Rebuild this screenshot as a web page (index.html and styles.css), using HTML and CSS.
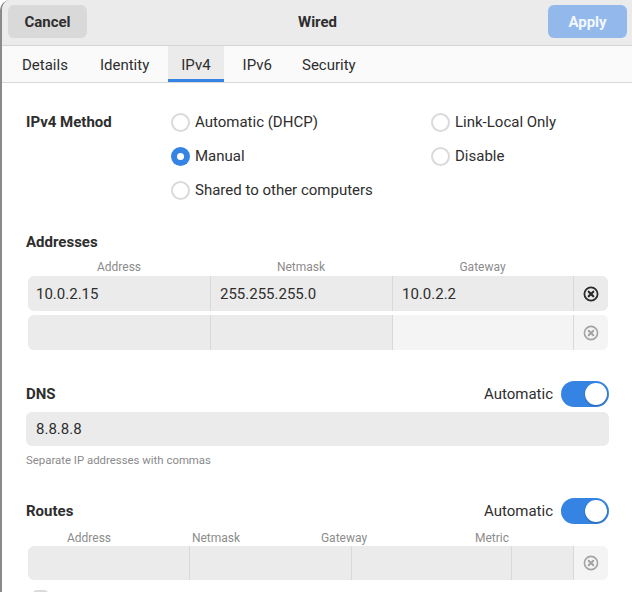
FILE: index.html
```html
<!DOCTYPE html>
<html lang="en">
<head>
<meta charset="utf-8">
<title>Wired</title>
<link rel="stylesheet" href="styles.css">
</head>
<body>
<div class="window">
  <header class="headerbar">
    <button class="btn btn-cancel">Cancel</button>
    <div class="title">Wired</div>
    <button class="btn btn-apply">Apply</button>
  </header>
  <nav class="tabs">
    <span class="tab">Details</span>
    <span class="tab">Identity</span>
    <span class="tab active">IPv4</span>
    <span class="tab">IPv6</span>
    <span class="tab">Security</span>
  </nav>
  <main class="content">
    <section class="method">
      <div class="method-label">IPv4 Method</div>
      <div class="radios">
        <label class="radio"><span class="dot"></span>Automatic (DHCP)</label>
        <label class="radio"><span class="dot"></span>Link-Local Only</label>
        <label class="radio"><span class="dot checked"></span>Manual</label>
        <label class="radio"><span class="dot"></span>Disable</label>
        <label class="radio"><span class="dot"></span>Shared to other computers</label>
      </div>
    </section>

    <section class="addresses">
      <div class="section-title">Addresses</div>
      <div class="colheads addr-heads">
        <span>Address</span><span>Netmask</span><span>Gateway</span><span></span>
      </div>
      <div class="entry-row addr-grid">
        <span class="cell">10.0.2.15</span>
        <span class="cell">255.255.255.0</span>
        <span class="cell">10.0.2.2</span>
        <span class="cell icon-cell">
          <svg width="16" height="16" viewBox="0 0 16 16"><circle cx="8" cy="8" r="6.6" fill="none" stroke="#2a2a2a" stroke-width="1.8"/><path d="M5.7 5.7 L10.3 10.3 M10.3 5.7 L5.7 10.3" stroke="#2a2a2a" stroke-width="2.2" stroke-linecap="round"/></svg>
        </span>
      </div>
      <div class="entry-row addr-grid">
        <span class="cell"></span>
        <span class="cell"></span>
        <span class="cell light"></span>
        <span class="cell icon-cell light">
          <svg width="16" height="16" viewBox="0 0 16 16"><circle cx="8" cy="8" r="6.6" fill="none" stroke="#a3a3a3" stroke-width="1.6"/><path d="M5.7 5.7 L10.3 10.3 M10.3 5.7 L5.7 10.3" stroke="#a3a3a3" stroke-width="2" stroke-linecap="round"/></svg>
        </span>
      </div>
    </section>

    <section class="dns">
      <div class="section-head">
        <div class="section-title">DNS</div>
        <div class="auto">Automatic <span class="switch"><span class="knob"></span></span></div>
      </div>
      <div class="entry">8.8.8.8</div>
      <div class="hint">Separate IP addresses with commas</div>
    </section>

    <section class="routes">
      <div class="section-head">
        <div class="section-title">Routes</div>
        <div class="auto">Automatic <span class="switch"><span class="knob"></span></span></div>
      </div>
      <div class="colheads route-heads">
        <span>Address</span><span>Netmask</span><span>Gateway</span><span>Metric</span>
      </div>
      <div class="entry-row route-grid">
        <span class="cell"></span>
        <span class="cell"></span>
        <span class="cell"></span>
        <span class="cell"></span>
        <span class="cell icon-cell light">
          <svg width="16" height="16" viewBox="0 0 16 16"><circle cx="8" cy="8" r="6.6" fill="none" stroke="#a3a3a3" stroke-width="1.6"/><path d="M5.7 5.7 L10.3 10.3 M10.3 5.7 L5.7 10.3" stroke="#a3a3a3" stroke-width="2" stroke-linecap="round"/></svg>
        </span>
      </div>
      <div class="check"></div>
    </section>
  </main>
</div>
</body>
</html>
```
FILE: styles.css
```css
* { box-sizing: border-box; }
html, body {
  margin: 0;
  padding: 0;
  height: 100%;
  background: #ffffff;
}
body {
  font-family: Roboto, "Noto Sans", sans-serif;
  font-size: 15px;
  color: #2e2e2e;
  overflow: hidden;
}
.window {
  height: 100%;
  border-left: 2px solid #8a8a8a;
  border-top-left-radius: 10px;
  background: #ffffff;
  overflow: hidden;
}
.headerbar {
  height: 46px;
  background: #ebebeb;
  border-bottom: 1px solid #d5d5d5;
  display: flex;
  align-items: flex-start;
  justify-content: space-between;
  padding: 5px 5px 0 6px;
}
.btn {
  font: inherit;
  font-weight: 700;
  height: 33px;
  border: none;
  border-radius: 6px;
  padding: 0;
  line-height: 35px;
}
.btn-cancel {
  width: 79px;
  background: #d9d9d9;
  color: #2e2e2e;
}
.btn-apply {
  width: 79px;
  background: #92b8ec;
  color: #f4f8fe;
}
.title {
  font-weight: 700;
  line-height: 35px;
}
.tabs {
  height: 37px;
  background: #fafafa;
  border-bottom: 1px solid #d8d8d8;
  display: flex;
  gap: 6px;
  padding-left: 7px;
}
.tab {
  padding: 0 13px;
  line-height: 38px;
  height: 36px;
  color: #2e2e2e;
}
.tab:nth-child(5) { margin-left: -2px; }
.tab.active {
  background: #ebebeb;
  box-shadow: inset 0 -3px 0 #3584e4;
}
.content {
  padding: 22px 23px 0 24px;
}
.method {
  display: flex;
}
.method-label {
  font-weight: 700;
  width: 145px;
  line-height: 34px;
}
.radios {
  display: grid;
  grid-template-columns: 260px auto;
  grid-auto-rows: 34px;
}
.radio {
  display: flex;
  align-items: center;
  gap: 5px;
}
.dot {
  width: 19px;
  height: 19px;
  border-radius: 50%;
  border: 2px solid #dadada;
  background: #fff;
  flex: none;
  position: relative;
}
.dot.checked {
  border: none;
  background: #3584e4;
}
.dot.checked::after {
  content: "";
  position: absolute;
  left: 6px;
  top: 6px;
  width: 7px;
  height: 7px;
  border-radius: 50%;
  background: #fff;
}
.section-title {
  font-weight: 700;
  line-height: 20px;
}
.addresses {
  margin-top: 25px;
}
.colheads {
  font-size: 12px;
  color: #8c8c8c;
  line-height: 18px;
  text-align: center;
}
.addr-heads {
  display: grid;
  grid-template-columns: 182px 182px 181px 35px;
  width: 580px;
  margin: 6px 0 0 2px;
}
.addr-grid {
  display: grid;
  grid-template-columns: 182px 182px 181px 35px;
  margin: 0 0 0 2px;
  width: 580px;
}
.entry-row {
  height: 35px;
  border-radius: 6px;
  overflow: hidden;
  margin-bottom: 4px;
}
.entry-row .cell {
  background: #ebebeb;
  border-left: 1px solid #d9d9d9;
  padding-left: 9px;
  display: flex;
  align-items: center;
}
.entry-row .cell:first-child {
  border-left: none;
  padding-left: 8px;
}
.entry-row .cell.light {
  background: #f4f4f4;
}
.entry-row .icon-cell {
  justify-content: center;
  padding-left: 0;
}
.dns {
  margin-top: 31px;
}
.section-head {
  display: flex;
  justify-content: space-between;
  align-items: center;
  height: 26px;
}
.auto {
  display: flex;
  align-items: center;
  gap: 8px;
}
.switch {
  width: 48px;
  height: 26px;
  border-radius: 13px;
  background: #3584e4;
  position: relative;
}
.knob {
  position: absolute;
  right: 2px;
  top: 2px;
  width: 22px;
  height: 22px;
  border-radius: 50%;
  background: #fff;
  box-shadow: 0 1px 2px rgba(0,0,0,0.25);
}
.entry {
  margin-top: 5px;
  height: 34px;
  background: #ebebeb;
  border-radius: 6px;
  padding-left: 10px;
  display: flex;
  align-items: center;
}
.hint {
  margin-top: 6px;
  font-size: 11.4px;
  color: #8a8a8a;
  line-height: 16px;
}
.routes {
  margin-top: 30px;
}
.route-heads {
  display: grid;
  grid-template-columns: 126px 128px 128px 168px;
  margin-top: 6px;
  line-height: 16px;
}
.route-grid {
  display: grid;
  grid-template-columns: 161px 162px 160px 62px 35px;
  margin: 0 0 0 2px;
  width: 580px;
  height: 34px;
}
.check {
  margin: 10px 0 0 7px;
  width: 15px;
  height: 15px;
  border: 2px solid #dadada;
  border-radius: 4px;
}
```
